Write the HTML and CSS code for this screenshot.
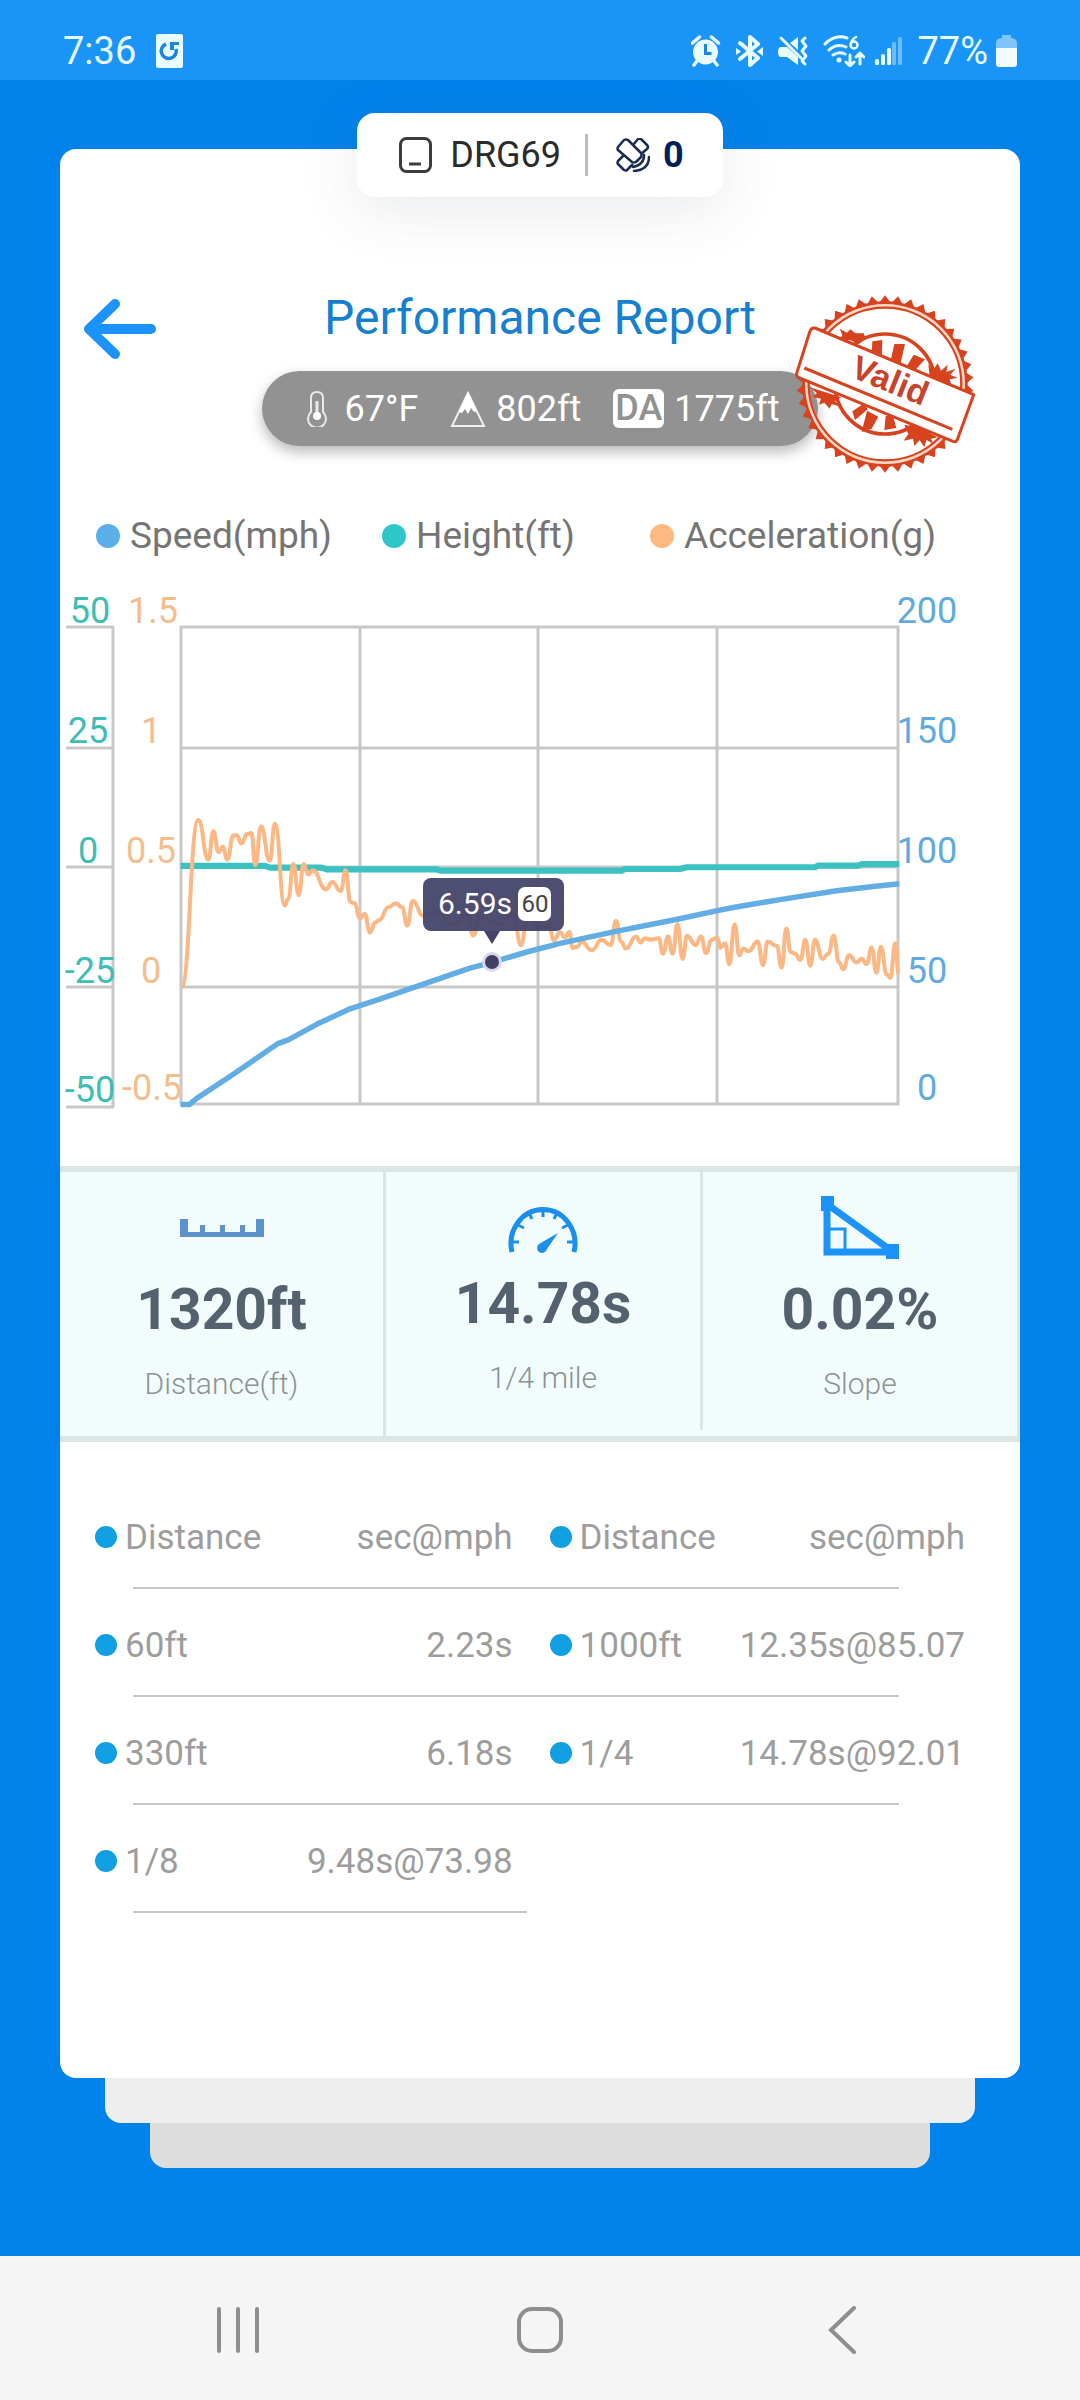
FILE: index.html
```
<!DOCTYPE html>
<html lang="en">
<head>
    <meta charset="UTF-8">
    <meta name="viewport" content="width=device-width, initial-scale=1.0">
    <title>Performance Report</title>
    <link rel="stylesheet" href="styles.css">
</head>
<body>

    <header class="status-bar">
        <span class="status-time">7:36</span>
        <svg class="status-app" width="27" height="34" viewBox="0 0 27 34">
            <rect width="27" height="34" rx="2" fill="#e8fbff"/>
            <path d="M10 10a7.500 7.500 0 1 0 10 5" fill="none" stroke="#1786dc" stroke-width="3.500"/>
            <path d="M14 8h9v3h-5v5h-4z" fill="#1786dc"/>
        </svg>
        <div class="status-icons">
            <!-- alarm -->
            <svg width="35" height="32" viewBox="0 0 35 32">
                <circle cx="14.500" cy="17" r="12.500" fill="#e8fbff"/>
                <path d="M1.500 8l7-6M27.500 8l-7-6M6 26l-3 4M23 26l3 4" stroke="#e8fbff" stroke-width="3.500" stroke-linecap="round"/>
                <path d="M14.500 9v9.500h6" fill="none" stroke="#1786dc" stroke-width="3"/>
            </svg>
            <!-- bluetooth -->
            <svg width="32" height="32" viewBox="0 0 32 32">
                <path d="M4 8l18 15-8 7V2l8 7L4 24" fill="none" stroke="#e8fbff" stroke-width="4" stroke-linejoin="round" stroke-linecap="round"/>
                <path d="M0 13l5 3.500-5 3.500zM27 12l-6 4.500 6 4.500z" fill="#e8fbff"/>
            </svg>
            <!-- vibrate / muted -->
            <svg width="35" height="32" viewBox="0 0 35 32">
                <path d="M2 12h7l11 10v8L9 22H2q-2-1-2-5t2-5zM12 8l8-6v13z" fill="#e8fbff"/>
                <path d="M3 3l20 20" stroke="#e8fbff" stroke-width="3" stroke-linecap="round"/>
                <path d="M27 3l-3 3 4 5-4 5 4 5-4 5 3 3" fill="none" stroke="#e8fbff" stroke-width="3" stroke-linecap="round" stroke-linejoin="round"/>
            </svg>
            <!-- wifi 6 -->
            <svg width="42" height="32" viewBox="0 0 42 32" fill="none" stroke="#e8fbff" stroke-width="3" stroke-linecap="round">
                <path d="M2 9Q12-1 24 3M6 15q8-7 17-3M10 20q6-4 12-1"/>
                <circle cx="16" cy="25" r="2.500" fill="#e8fbff" stroke="none"/>
                <path d="M33 2q-5 3-5 7" stroke-width="2.500"/>
                <circle cx="31" cy="10" r="3.500" stroke-width="2.500"/>
                <path d="M27 20v10M23 27l4 4 4-4M37 29V19M33 22l4-4 4 4"/>
            </svg>
            <!-- signal -->
            <svg width="32" height="32" viewBox="0 0 32 32" fill="#e8fbff">
                <rect x="0" y="24" width="4" height="6" rx="1.500"/>
                <rect x="6" y="19" width="4" height="11" rx="1.500"/>
                <rect x="12" y="13" width="4" height="17" rx="1.500"/>
                <rect x="17" y="7" width="4" height="23" rx="1.500" opacity=".4"/>
                <rect x="23" y="2" width="4" height="28" rx="1.500" opacity=".4"/>
            </svg>
            <span class="status-battery">
                77%
                <svg width="21" height="32" viewBox="0 0 21 32">
                    <path d="M5 3h1V0h9v3h1q5 1 5 5v5H0V8q0-4 5-5z" fill="#7fc4fb"/>
                    <path d="M0 13h21v16q0 3-3 3H3q-3 0-3-3z" fill="#f2fcff"/>
                </svg>
            </span>
        </div>
    </header>

    <main class="page">
        <div class="device">
            <svg width="33" height="36" viewBox="0 0 33 36" fill="none" stroke="#3c3c3c">
                <rect x="1.500" y="1.500" width="30" height="33" rx="6" stroke-width="3"/>
                <path d="M10 27h12" stroke-width="3"/>
            </svg>
            <span class="device-name">DRG69</span>
            <span class="device-line"></span>
            <svg width="34" height="34" viewBox="0 0 34 34" fill="none" stroke="#1b2c52" stroke-width="2.500" stroke-linejoin="round">
                <path d="M2 9l6-7q2-1 4 0l13 13q1 2 0 4l-5 5q-2 1-4 0L2 12q-1-1 0-3z"/>
                <path d="M17 7l5-6q2-1 4 1l5 5q2 2 0 4l-6 5M8 17l-6 6q-1 2 0 3l6 6q2 1 3 0l6-6"/>
                <path d="M28 17q0 10-11 12M33 19q0 13-15 14" stroke-linecap="round"/>
            </svg>
            <strong class="device-count">0</strong>
        </div>

        <section class="card">
            <div class="card-head">
                <button class="back-btn" type="button" aria-label="Back">
                    <svg width="72" height="60" viewBox="0 0 72 60" fill="none" stroke="#1b93fa" stroke-width="10" stroke-linecap="round" stroke-linejoin="round">
                        <path d="M31 5L5 30l26 25M8 30h59"/>
                    </svg>
                </button>
                <h1>Performance Report</h1>
            </div>

            <div class="weather">
                <span class="weather-item">
                    <svg width="27" height="36" viewBox="0 0 27 36" fill="none" stroke="#e9e9e9" stroke-width="2">
                        <path d="M4 21V7q0-6 6-6t6 6v14a9 9 0 1 1-12 0z"/>
                        <path d="M10 10v14" stroke-width="3"/>
                        <circle cx="10" cy="25" r="4" fill="#fff" stroke="none"/>
                    </svg>
                    67°F
                </span>
                <span class="weather-item">
                    <svg width="36" height="36" viewBox="0 0 36 36">
                        <path d="M18 2L2 35h32z" fill="none" stroke="#f0f0f0" stroke-width="2"/>
                        <path d="M18 1l9 19-3 1-3-4-3 6-3-5-3 4-3-1z" fill="#fff"/>
                    </svg>
                    802ft
                </span>
                <span class="weather-item">
                    <span class="da">DA</span>
                    1775ft
                </span>
            </div>

            <!-- stamp lies over the end of the weather pill -->
            <svg class="stamp" width="184" height="180" viewBox="0 0 184 180">
                <g transform="scale(.33333)" fill="none" stroke="#d8431f">
                    <path id="teeth" fill="#d8431f" fill-rule="evenodd" stroke="none"/>
                    <circle cx="270" cy="270" r="236" stroke="#ffd9c8" stroke-width="20"/>
                    <circle cx="270" cy="270" r="244" stroke-width="8"/>
                    <circle cx="270" cy="270" r="229" stroke-width="7"/>
                    <circle cx="270" cy="270" r="150" stroke-width="11"/>
                    <g fill="#d8431f" stroke="none">
                        <path d="M232 142l30-4-2 62-30-16zM298 150l32 0-16 70-28-16zM356 182l34 14-40 44-20-14z"/>
                        <path d="M172 352l36-24 10 18-38 32zM216 350l34 18-20 36-30 10zM272 366l22 0 10 36-36 6z"/>
                        <path d="M134 104l22 12 10-10 16 12 24 0 6 16-20 16-28-12-30 0 8-14z"/>
                        <path d="M400 210l14 18 14-20 10 22 20-18-4 22 28-10-16 18 22 10-24 4 6 20-26-16-40-10z"/>
                        <path d="M328 392l60 14 12-4 4 16 24 12-20 4 8 16-22-12-6 22-14-22-16 18-4-22-28 6 14-20z"/>
                        <path d="M44 280l64 20 30 10-18 12 16 16-26-8-6 14-16-18-16 6 6-18-26-6 14-10z"/>
                    </g>
                    <path d="M60 102L536 302l-48 132q-3 12-14 8L10 250q-7-4-5-12l39-124q4-14 16-12z" fill="#fff" stroke-width="9" stroke-linejoin="round"/>
                    <path d="M28 222l444 184" stroke-width="9"/>
                </g>
                <text class="stamp-text" x="95" y="98" transform="rotate(22 95 87)">Valid</text>
            </svg>

            <ul class="legend">
                <li><i class="dot dot-speed"></i>Speed(mph)</li>
                <li><i class="dot dot-height"></i>Height(ft)</li>
                <li><i class="dot dot-accel"></i>Acceleration(g)</li>
            </ul>

            <svg class="chart" viewBox="0 0 960 540">
                <!-- grid -->
                <g class="grid">
                    <path d="M6 47H54M6 168H54M6 287H54M6 407H54M6 527H54M53 47V527"/>
                    <path d="M121 47H838V524H121zM121 168H838M121 287H838M121 407H838M300 47V524M478 47V524M657 47V524"/>
                </g>
                <!-- axis labels -->
                <g class="axis axis-height">
                    <text x="30" y="43">50</text>
                    <text x="28" y="163">25</text>
                    <text x="28" y="283">0</text>
                    <text x="30" y="403">-25</text>
                    <text x="30" y="522">-50</text>
                </g>
                <g class="axis axis-accel">
                    <text x="93" y="43">1.5</text>
                    <text x="91" y="163">1</text>
                    <text x="91" y="283">0.5</text>
                    <text x="91" y="403">0</text>
                    <text x="92" y="520">-0.5</text>
                </g>
                <g class="axis axis-speed">
                    <text x="867" y="43">200</text>
                    <text x="867" y="163">150</text>
                    <text x="867" y="283">100</text>
                    <text x="867" y="403">50</text>
                    <text x="867" y="520">0</text>
                </g>
                <!-- series, filled in by the script -->
                <g transform="scale(.33333 .34444)" class="series">
                    <path id="lineHeight"/>
                    <path id="lineAccel"/>
                    <path id="lineSpeed"/>
                </g>
                <!-- marker -->
                <circle cx="432" cy="382" r="10" fill="#d9d8f0"/>
                <circle cx="432" cy="382" r="7" fill="#413f63"/>
                <path d="M424 351h16l-8 13z" fill="#45436a"/>
                <rect x="363" y="298" width="141" height="53" rx="8" fill="#45436a" fill-opacity=".95"/>
                <text class="tip-time" x="378" y="334">6.59s</text>
                <rect x="458" y="307" width="33" height="34" rx="7" fill="#fff"/>
                <text class="tip-mph" x="475" y="332">60</text>
            </svg>

            <div class="stats">
                <div class="stat">
                    <svg width="84" height="72" viewBox="0 0 84 72" fill="#5c93cd">
                        <path d="M0 27h8v13h12v-7h5v7h15v-7h5v7h15v-7h5v7h11V27h8v18H0z"/>
                    </svg>
                    <b>1320ft</b>
                    <span>Distance(ft)</span>
                </div>
                <div class="stat stat-main">
                    <svg width="72" height="72" viewBox="0 0 72 72" fill="none" stroke="#1b8fec">
                        <path d="M5 66A32 34 0 1 1 67 66" stroke-width="5"/>
                        <path d="M36 24v7M22 27l3 6M50 27l-3 6M11 39l6 3M61 39l-6 3M6 56h6M66 56h-6" stroke-width="3"/>
                        <path d="M51 47L40 63a5 5 0 1 1-8-5z" fill="#1b8fec" stroke="none"/>
                    </svg>
                    <b>14.78s</b>
                    <span>1/4 mile</span>
                </div>
                <div class="stat">
                    <svg width="78" height="72" viewBox="0 0 78 72" fill="none" stroke="#1b93fa">
                        <path d="M6 12v48h66z" stroke-width="7"/>
                        <path d="M8 37h16v20" stroke-width="3"/>
                        <path d="M0 4h13v15H0zM65 52h13v15H65z" fill="#1b93fa" stroke="none"/>
                    </svg>
                    <b>0.02%</b>
                    <span>Slope</span>
                </div>
            </div>

            <table class="splits">
                <colgroup><col class="c1"><col class="c2"><col class="c3"><col class="c4"></colgroup>
                <tr>
                    <th scope="col" class="name">Distance</th><th scope="col">sec@mph</th>
                    <th scope="col" class="name">Distance</th><th scope="col">sec@mph</th>
                </tr>
                <tr>
                    <td class="name">60ft</td><td>2.23s</td>
                    <td class="name">1000ft</td><td>12.35s@85.07</td>
                </tr>
                <tr>
                    <td class="name">330ft</td><td>6.18s</td>
                    <td class="name">1/4</td><td>14.78s@92.01</td>
                </tr>
                <tr class="half">
                    <td class="name">1/8</td><td>9.48s@73.98</td>
                    <td></td><td></td>
                </tr>
            </table>
        </section>
        <div class="layer layer-1"></div>
        <div class="layer layer-2"></div>
    </main>

    <nav class="nav-bar">
        <button type="button" aria-label="Recent apps">
            <svg width="48" height="48" viewBox="0 0 48 48" stroke="#8e8e8e" stroke-width="4" stroke-linecap="round">
                <path d="M5 3v42M24 3v42M43 3v42"/>
            </svg>
        </button>
        <button type="button" aria-label="Home">
            <svg width="48" height="48" viewBox="0 0 48 48" fill="none" stroke="#8e8e8e" stroke-width="4">
                <rect x="3" y="3" width="42" height="42" rx="13"/>
            </svg>
        </button>
        <button type="button" aria-label="Back">
            <svg width="48" height="48" viewBox="0 0 48 48" fill="none" stroke="#8e8e8e" stroke-width="4" stroke-linecap="round">
                <path d="M36 2L13 24l23 22"/>
            </svg>
        </button>
    </nav>

    <script>
        const accel = [
            [365,1180],[415,697],[445,812],[460,730],[476,790],[488,775],[502,812],[520,742],[530,741],[544,765],
            [562,737],[574,735],[586,828],[603,715],[629,815],[645,707],[674,945],[685,925],[700,825],[716,915],
            [731,825],[745,855],[758,843],[798,898],[817,877],[842,903],[857,843],[871,935],[883,938],[900,982],
            [914,970],[930,1023],[945,995],[958,987],[985,950],[1008,939],[1026,950],[1042,1003],[1058,932],
            [1090,975],[1130,960],[1180,1000],[1220,970],[1240,1032],[1260,975],[1310,1000],[1360,970],[1383,1060],
            [1402,980],[1450,1010],[1465,1000],[1482,1045],[1500,1023],[1515,1038],[1528,1022],[1538,1068],
            [1552,1065],[1565,1050],[1595,1075],[1625,1045],[1652,1060],[1668,990],[1683,1050],[1698,1070],
            [1728,1035],[1742,1052],[1755,1040],[1770,1044],[1796,1040],[1809,1085],[1824,1035],[1838,1085],
            [1852,1000],[1868,1100],[1881,1033],[1907,1060],[1923,1035],[1938,1083],[1955,1045],[1972,1038],
            [1981,1068],[1995,1055],[2008,1115],[2024,1000],[2038,1090],[2050,1070],[2065,1078],[2093,1050],
            [2109,1118],[2123,1050],[2150,1062],[2165,1125],[2179,1012],[2192,1080],[2205,1085],[2221,1103],
            [2236,1045],[2251,1120],[2265,1045],[2288,1100],[2305,1085],[2321,1033],[2337,1110],[2350,1130],
            [2367,1090],[2390,1110],[2405,1100],[2420,1115],[2435,1067],[2449,1140],[2463,1065],[2480,1145],
            [2491,1155],[2506,1055],[2516,1145]
        ];
        const speed = [
            [362,1523],[388,1523],[410,1505],[520,1435],[655,1345],[685,1335],[770,1290],[870,1245],[950,1220],
            [1040,1190],[1160,1150],[1230,1127],[1296,1110],[1400,1080],[1500,1055],[1668,1020],[1852,985],
            [1972,960],[2024,950],[2160,928],[2330,902],[2440,890],[2518,882]
        ];
        const height = [
            [362,830],[615,830],[630,835],[785,835],[800,840],[1130,840],[1140,844],[1685,844],[1695,839],
            [1860,839],[1880,834],[2265,834],[2275,829],[2395,829],[2405,825],[2518,825]
        ];

        function straight(points) {
            return 'M' + points.map(p => p.join(' ')).join('L');
        }

        function smooth(points) {
            let d = 'M' + points[0].join(' ');
            for (let i = 1; i < points.length; i++) {
                const [x0, y0] = points[i - 1];
                const [x1, y1] = points[i];
                const mx = (x0 + x1) / 2;
                d += `C${mx} ${y0} ${mx} ${y1} ${x1} ${y1}`;
            }
            return d;
        }

        function teeth(cx, cy, inner, outer, count) {
            const points = [];
            for (let i = 0; i < count * 2; i++) {
                const r = i % 2 ? inner : outer;
                const a = Math.PI * i / count;
                points.push([(cx + r * Math.sin(a)).toFixed(1), (cy - r * Math.cos(a)).toFixed(1)]);
            }
            // the round hole turns the disc into a ring
            return straight(points) + `Z M${cx - inner} ${cy}a${inner} ${inner} 0 1 1 ${inner * 2} 0a${inner} ${inner} 0 1 1 ${-inner * 2} 0`;
        }

        document.getElementById('lineAccel').setAttribute('d', smooth(accel));
        document.getElementById('lineSpeed').setAttribute('d', straight(speed));
        document.getElementById('lineHeight').setAttribute('d', straight(height));
        document.getElementById('teeth').setAttribute('d', teeth(270, 270, 243, 266, 42));
    </script>

</body>
</html>
```
FILE: styles.css
```
* {
    box-sizing: border-box;
}
body {
    margin: 0;
    min-height: 100vh;
    display: flex;
    flex-direction: column;
    font-family: Roboto, "Liberation Sans", sans-serif;
    font-size: 36px;
    background-color: #0082eb;
}
svg {
    display: block;
    flex: none;
}
button {
    padding: 0;
    border: 0;
    background: none;
    cursor: pointer;
}

/* status bar */
.status-bar {
    display: flex;
    align-items: center;
    height: 80px;
    padding: 22px 63px 0;
    font-size: 38px;
    color: #e8fbff;
    background-color: #1895f7;
}
.status-app {
    margin-left: 20px;
}
.status-icons {
    display: flex;
    align-items: center;
    gap: 10px;
    margin-left: auto;
}
.status-battery {
    display: flex;
    align-items: center;
    gap: 8px;
}

.page {
    flex: 1;
    padding: 33px 60px 88px;
}
.device {
    position: relative;
    z-index: 1;
    display: flex;
    align-items: center;
    width: fit-content;
    height: 84px;
    margin: 0 auto -48px;
    padding: 0 39px 0 42px;
    color: #2b2b2b;
    background-color: #fff;
    border-radius: 18px;
    box-shadow: 0 12px 60px rgba(60, 70, 90, 0.12);
}
.device-name {
    margin-left: 18px;
}
.device-line {
    width: 3px;
    height: 42px;
    margin: 0 28px 0 24px;
    background-color: #bbb;
}
.device-count {
    margin-left: 13px;
    color: #00205b;
}

.card {
    position: relative;
    padding: 141px 0 165px;
    background-color: #fff;
    border-radius: 16px;
}
.card-head {
    display: grid;
    grid-template-columns: 72px 1fr 72px;
    padding: 0 24px;
}
.back-btn {
    padding-top: 9px;
}
h1 {
    margin: 0;
    font-size: 48px;
    font-weight: 400;
    line-height: 56px;
    text-align: center;
    color: #167fd0;
}

.weather {
    display: flex;
    align-items: center;
    gap: 32px;
    width: fit-content;
    height: 75px;
    margin: 12px auto 0;
    padding: 0 38px 0 45px;
    color: #fff;
    background-color: #929292;
    border-radius: 38px;
    box-shadow: 0 6px 14px rgba(0, 0, 0, 0.28);
}
.weather-item {
    display: flex;
    align-items: center;
    gap: 10px;
}
.da {
    padding: 0 2px;
    font-weight: 500;
    line-height: 39px;
    color: #929292;
    background-color: #fff;
    border-radius: 6px;
}
.stamp {
    position: absolute;
    top: 145px;
    right: 41px;
}
.stamp-text {
    font-family: "Liberation Sans", Arial, sans-serif;
    font-size: 34px;
    font-weight: 700;
    text-anchor: middle;
    fill: #c8432c;
}

.legend {
    display: grid;
    grid-template-columns: 286fr 268fr 370fr;
    margin: 68px 0 22px;
    padding: 0 0 0 36px;
    list-style: none;
    font-size: 37px;
    line-height: 44px;
    color: #757575;
}
.legend li {
    display: flex;
    align-items: center;
    gap: 10px;
}
.dot {
    width: 24px;
    height: 24px;
    border-radius: 50%;
}
.dot-speed { background-color: #5aaeea; }
.dot-height { background-color: #2ec7c9; }
.dot-accel { background-color: #ffb980; }

/* chart */
.chart {
    width: 100%;
    margin-bottom: 46px;
}
.grid path {
    fill: none;
    stroke: #c8c8c8;
    stroke-width: 3;
}
.axis {
    font-size: 36px;
    text-anchor: middle;
}
.axis-height { fill: #3dbdb4; }
.axis-accel { fill: #f5bd8c; }
.axis-speed { fill: #60aade; }
.series path {
    fill: none;
    stroke-linejoin: round;
}
#lineHeight {
    stroke: #3bc1c1;
    stroke-width: 18;
}
#lineAccel {
    stroke: #fbb884;
    stroke-width: 12;
}
#lineSpeed {
    stroke: #61ade4;
    stroke-width: 16;
}
.tip-time {
    font-size: 30px;
    fill: #fff;
}
.tip-mph {
    font-size: 24px;
    text-anchor: middle;
    fill: #444;
}

/* totals */
.stats {
    display: grid;
    grid-template-columns: 326fr 317fr 317fr;
    background-color: #f3fcfc;
    border-top: 6px solid #dae5e4;
    border-bottom: 6px solid #dae5e4;
}
.stat {
    display: flex;
    flex-direction: column;
    align-items: center;
    height: 264px;
    padding-top: 20px;
    border-right: 3px solid #dae5e4;
}
.stat b {
    margin-top: 12px;
    font-size: 57px;
    line-height: 68px;
    color: #54616e;
}
.stat span {
    margin-top: 22px;
    font-size: 30px;
    font-weight: 300;
    line-height: 36px;
    color: #8d9292;
}
.stat-main {
    height: 258px;
    padding-top: 14px;
}

.splits {
    width: 870px;
    max-width: 100%;
    margin: 39px 0 0 35px;
    border-collapse: collapse;
    table-layout: fixed;
    font-size: 35px;
    color: #9d9d9d;
}
.c1 { width: 22%; }
.c2 { width: 26%; }
.c3 { width: 23%; }
.c4 { width: 29%; }
.splits tr {
    height: 108px;
    background: linear-gradient(#c6c6c6, #c6c6c6) no-repeat 38px 100% / 88% 2px;
}
.splits .half {
    background-size: 394px 2px;
}
.splits th,
.splits td {
    padding: 4px 0 0;
    font-weight: 400;
    text-align: right;
    white-space: nowrap;
}
.splits .name {
    text-align: left;
}
.splits .name + * + .name {
    padding-left: 37px;
}
.name::before {
    content: "";
    display: inline-block;
    width: 22px;
    height: 22px;
    margin-right: 8px;
    vertical-align: 1px;
    background-color: #119fe4;
    border-radius: 50%;
}

/* sheets under the card */
.layer {
    height: 45px;
    border-radius: 0 0 16px 16px;
}
.layer-1 {
    margin: 0 45px;
    background-color: #eee;
}
.layer-2 {
    margin: 0 90px;
    background-color: #ddd;
}

.nav-bar {
    display: grid;
    grid-template-columns: repeat(3, 1fr);
    height: 144px;
    padding: 4px 87px 0;
    background-color: #f5f5f5;
}
.nav-bar button {
    display: flex;
    align-items: center;
    justify-content: center;
}
```
